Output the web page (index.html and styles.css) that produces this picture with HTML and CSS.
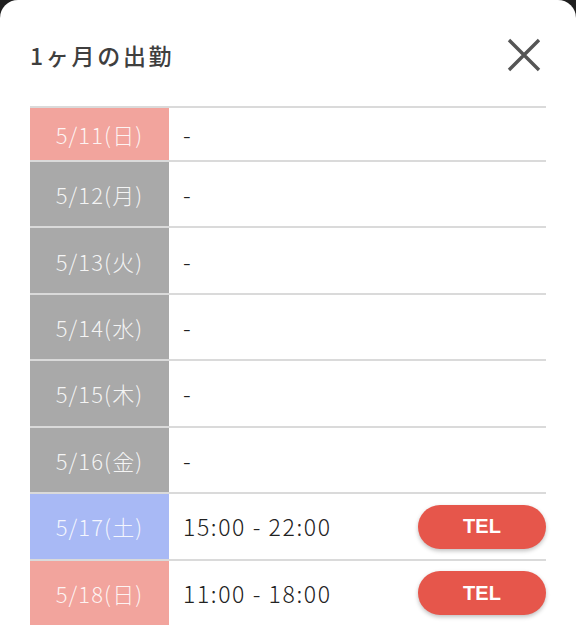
FILE: index.html
```html
<!DOCTYPE html>
<html lang="ja">
<head>
<meta charset="utf-8">
<link rel="stylesheet" href="styles.css">
</head>
<body>
<div class="modal">
  <div class="header">
    <h1 class="title">1ヶ月の出勤</h1>
    <svg class="close" viewBox="0 0 34 34" width="34" height="34"><path d="M2 2 L32 32 M32 2 L2 32" stroke="#555" stroke-width="3.4" fill="none"/></svg>
  </div>
  <div class="list">
    <div class="row first"><div class="date sun">5/11(日)</div><div class="info">-</div></div>
    <div class="row"><div class="date off">5/12(月)</div><div class="info">-</div></div>
    <div class="row"><div class="date off">5/13(火)</div><div class="info">-</div></div>
    <div class="row"><div class="date off">5/14(水)</div><div class="info">-</div></div>
    <div class="row"><div class="date off">5/15(木)</div><div class="info">-</div></div>
    <div class="row"><div class="date off">5/16(金)</div><div class="info">-</div></div>
    <div class="row"><div class="date sat">5/17(土)</div><div class="info"><span class="time">15:00 - 22:00</span><span class="tel">TEL</span></div></div>
    <div class="row last"><div class="date sun">5/18(日)</div><div class="info"><span class="time">11:00 - 18:00</span><span class="tel">TEL</span></div></div>
  </div>
</div>
</body>
</html>
```
FILE: styles.css
```css
html, body {
  margin: 0;
  padding: 0;
  background: #1f1f1f;
}
body {
  width: 576px;
  height: 629px;
  overflow: hidden;
  font-family: "Noto Sans CJK JP", "Noto Sans", sans-serif;
}
.modal {
  background: #fff;
  height: 629px;
  border-radius: 18px 18px 0 0;
  box-sizing: border-box;
}
.header {
  height: 106px;
  display: flex;
  align-items: center;
  justify-content: space-between;
  padding: 0 35px 0 30px;
  box-sizing: border-box;
}
.title {
  margin: 0;
  margin-top: 4px;
  font-size: 23px;
  font-weight: 500;
  color: #3f3f3f;
  letter-spacing: 2.7px;
}
.close {
  display: block;
  margin-top: 3px;
}
.list {
  margin: 0 30px;
}
.row {
  display: grid;
  grid-template-columns: 139px 1fr;
  column-gap: 1px;
  height: 66.43px;
  box-sizing: border-box;
  border-top: 2px solid #dadada;
}
.row.first {
  height: 54px;
}
.date {
  display: flex;
  align-items: center;
  justify-content: center;
  font-size: 22px;
  font-weight: 300;
  color: rgba(255,255,255,0.88);
  letter-spacing: 1.1px;
}
.sun { background: #f2a49d; }
.off { background: #a9a9a9; }
.sat { background: #a8b9f5; }
.info {
  display: flex;
  align-items: center;
  justify-content: space-between;
  padding-left: 13px;
  font-size: 23px;
  font-weight: 300;
  color: #222;
}
.time {
  letter-spacing: 1.6px;
}
.tel {
  width: 128px;
  height: 44px;
  border-radius: 22px;
  background: #e6564b;
  color: #fff;
  font-family: "Liberation Sans", Arial, sans-serif;
  font-weight: 700;
  font-size: 20px;
  display: flex;
  align-items: center;
  justify-content: center;
  box-shadow: 0 2px 4px rgba(0,0,0,0.25);
  margin-top: 1px;
}
```
